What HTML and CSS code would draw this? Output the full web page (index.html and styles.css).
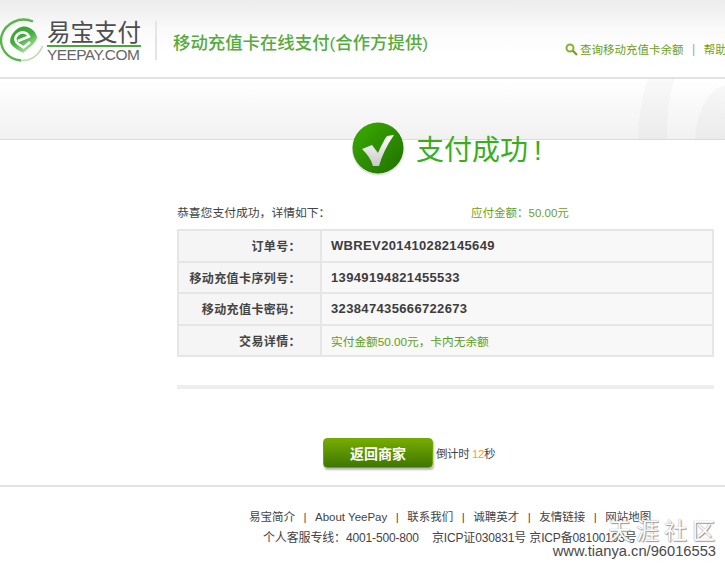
FILE: index.html
```html
<!DOCTYPE html>
<html lang="zh-CN">
<head>
<meta charset="utf-8">
<title>易宝支付</title>
<link rel="stylesheet" href="styles.css">
</head>
<body>
<div class="page">
  <header class="header">
    <div class="logo">
      <svg class="logo-mark" width="44" height="44" viewBox="0 0 44 44">
        <defs>
          <linearGradient id="blob" x1="0" y1="0" x2="0.6" y2="1">
            <stop offset="0" stop-color="#2f9e2c"/>
            <stop offset="0.55" stop-color="#45b040"/>
            <stop offset="1" stop-color="#b5e0a8"/>
          </linearGradient>
        </defs>
        <path d="M33 3.500C20 -2 5 5 1.500 18C-1 30 7 41 21 42.500" fill="none" stroke="#5cb54c" stroke-width="2.400"/>
        <path d="M21 42.500C31 43 39 37 42.500 28" fill="none" stroke="#b7deac" stroke-width="1.600"/>
        <path d="M23 8.500C29 7.500 36 13 37 19C37 22 34 26 29 30L23 35C19 33 14 30 11 26C8 21 14 10 23 8.500Z" fill="url(#blob)"/>
        <path d="M18 23L29 18.500C27 14 21 13 17.500 16.500C14 20 15 24 19 26.500L23.500 29.500L30 24" fill="none" stroke="#fff" stroke-width="2.600"/>
      </svg>
      <div class="logo-text">
        <div class="logo-cn">易宝支付</div>
        <div class="logo-en">YEEPAY.COM</div>
      </div>
    </div>
    <div class="header-divider"></div>
    <h1 class="header-title">移动充值卡在线支付<span class="paren">(</span>合作方提供<span class="paren">)</span></h1>
    <nav class="header-nav">
      <svg class="search-icon" width="13" height="13" viewBox="0 0 13 13">
        <circle cx="5" cy="5" r="3.500" fill="none" stroke="#8cb030" stroke-width="2"/>
        <path d="M7.700 7.700L12 12" stroke="#7fa328" stroke-width="2.400"/>
      </svg>
      <a class="nav-link">查询移动充值卡余额</a>
      <span class="nav-sep">|</span>
      <a class="nav-link">帮助中心</a>
    </nav>
  </header>
  <div class="band">
    <svg class="band-swirl" width="90" height="60" viewBox="0 0 90 60">
      <path d="M13 0C7 14 4 36 3 60H32C32 36 34 16 40 0Z" fill="#000" fill-opacity=".025"/>
      <path d="M90 6C74 10 62 30 60 60H90Z" fill="#000" fill-opacity=".025"/>
    </svg>
  </div>
  <main class="main">
    <div class="success">
      <svg class="success-icon" width="54" height="54" viewBox="0 0 54 54">
        <defs>
          <linearGradient id="ball" x1="0" y1="0" x2="1" y2="1">
            <stop offset="0" stop-color="#3bad00"/>
            <stop offset="1" stop-color="#1f7000"/>
          </linearGradient>
          <linearGradient id="tick" x1="0" y1="0" x2="0" y2="1">
            <stop offset="0" stop-color="#ffffff"/>
            <stop offset="1" stop-color="#c8c8c8"/>
          </linearGradient>
        </defs>
        <circle cx="27" cy="27.500" r="26" fill="#e2e2e2"/>
        <circle cx="27" cy="26" r="25.500" fill="url(#ball)"/>
        <path d="M11 27L21 23L27 31C30 24 33 18 36 14L43 13C36 23 31 33 28 44L22 44C20 37 16 32 11 27Z" fill="url(#tick)"/>
      </svg>
      <div class="success-text">支付成功<span class="bang">!</span></div>
    </div>
    <div class="summary">
      <span class="summary-note">恭喜您支付成功，详情如下：</span>
      <span class="summary-amount">应付金额：50.00元</span>
    </div>
    <table class="detail">
      <tr><th>订单号：</th><td>WBREV201410282145649</td></tr>
      <tr><th>移动充值卡序列号：</th><td>13949194821455533</td></tr>
      <tr><th>移动充值卡密码：</th><td>323847435666722673</td></tr>
      <tr><th>交易详情：</th><td class="detail-green">实付金额50.00元，卡内无余额</td></tr>
    </table>
    <div class="rule"></div>
    <div class="actions">
      <a class="back-btn">返回商家</a>
      <span class="countdown">倒计时 <em>12</em>秒</span>
    </div>
  </main>
  <footer class="footer">
    <div class="footer-links">
      <a>易宝简介</a><i>|</i><a class="dark">About YeePay</a><i>|</i><a>联系我们</a><i>|</i><a>诚聘英才</a><i>|</i><a>友情链接</a><i>|</i><a>网站地图</a>
    </div>
    <div class="footer-info">
      <span>个人客服专线：4001-500-800</span><span>京ICP证030831号 京ICP备08100193号</span>
    </div>
  </footer>
  <div class="watermark">
    <div class="wm-cn">天涯社区</div>
    <div class="wm-url">www.tianya.cn/96016553</div>
  </div>
</div>
</body>
</html>
```
FILE: styles.css
```css
* { box-sizing: border-box; }
html, body { margin: 0; padding: 0; background: #fff; }
body {
  font-family: "Liberation Sans", "Noto Sans CJK SC", sans-serif;
  font-size: 12px;
  color: #444;
  overflow: hidden;
}
.page { position: relative; width: 725px; height: 567px; overflow: hidden; }

.header {
  height: 79px;
  display: flex;
  align-items: flex-start;
  white-space: nowrap;
  background: linear-gradient(#ececec 0, #fafafa 30px, #fff 55px);
  border-bottom: 2px solid #e2e2e2;
}
.logo { display: flex; width: 155px; flex: none; padding-top: 18px; }
.logo-mark { flex: none; }
.logo-text { margin-left: 3px; width: 94px; }
.logo-cn {
  font-family: "Noto Sans CJK SC", sans-serif;
  font-size: 23.500px;
  line-height: 26px;
  color: #4d4d4d;
  border-bottom: 2px solid #4aa63c;
  height: 29px;
}
.logo-en { font-size: 15.500px; line-height: 15px; color: #666; letter-spacing: -.6px; }
.header-divider { width: 2px; height: 39px; margin-top: 21px; background: #e4e4e4; flex: none; }
.header-title {
  margin: 30px 0 0 16px;
  font-family: "Noto Sans CJK SC", sans-serif;
  font-size: 17.400px;
  line-height: 24px;
  font-weight: 500;
  color: #55ab3c;
  flex: none;
}
.paren { font-family: "Liberation Sans", sans-serif; }
.header-nav {
  display: flex;
  align-items: center;
  margin: 41px 0 0 137px;
  height: 16px;
  flex: none;
  color: #6f9e1a;
}
.search-icon { flex: none; margin-right: 2px; }
.nav-link { font-size: 11.500px; color: #6f9e1a; }
.nav-sep { margin: 0 8.500px; color: #8ab0a0; }

.band {
  position: relative;
  height: 61px;
  background: linear-gradient(#fff, #f1f1f1);
  border-bottom: 1px solid #dcdcdc;
}
.band-swirl { position: absolute; right: 0; top: 0; }

.main {
  padding: 0 11px 0 177px;
  background: linear-gradient(#efefef, #fff) no-repeat top / 100% 6px;
}
.success {
  display: flex;
  align-items: flex-start;
  height: 81px;
  margin: -18px 0 0 174px;
  position: relative;
}
.success-icon { flex: none; }
.success-text {
  margin: 6px 0 0 11px;
  font-family: "Noto Sans CJK SC", sans-serif;
  font-size: 28px;
  line-height: 40px;
  color: #3aae1a;
}
.bang { font-family: "Liberation Sans", sans-serif; margin-left: 6px; }
.summary { display: flex; height: 21px; line-height: 21px; font-size: 11.500px; }
.summary-note { width: 294px; font-size: 11.800px; color: #444; }
.summary-amount { color: #6f9e1a; }
.detail {
  width: 537px;
  border-collapse: collapse;
  margin-top: 5px;
  border: 2px solid #e8e8e8;
}
.detail th, .detail td { height: 31.500px; padding: 0; border: 2px solid #e6e6e6; }
.detail th {
  width: 143px;
  padding-right: 19px;
  text-align: right;
  font-family: "Noto Sans CJK TC", sans-serif;
  font-size: 12px;
  letter-spacing: .4px;
  font-weight: bold;
  background: #f5f5f5;
  color: #444;
}
.detail td {
  padding-left: 9px;
  font-size: 13px;
  font-weight: bold;
  letter-spacing: .35px;
  color: #3d3d3d;
  background: #f8f8f8;
}
.detail td.detail-green { font-size: 11.700px; font-weight: normal; letter-spacing: 0; color: #5e9e14; }
.rule { height: 4px; margin-top: 28px; background: #eeeeee; }
.actions { display: flex; align-items: center; margin: 49px 0 0 146px; height: 30px; }
.back-btn {
  width: 110px;
  height: 30px;
  line-height: 29px;
  text-align: center;
  font-family: "Noto Sans CJK SC", sans-serif;
  font-size: 14px;
  font-weight: 700;
  color: #fff;
  border: 1px solid #6fa800;
  border-radius: 4px;
  background: linear-gradient(#78ab00, #3d7700);
  box-shadow: 1px 2px 2px #bbb;
}
.countdown { margin-left: 3px; font-size: 11.500px; color: #444; letter-spacing: -.4px; }
.countdown em { font-style: normal; color: #f9a02c; }

.footer {
  margin-top: 17px;
  border-top: 2px solid #e4e4e4;
  padding-top: 20px;
  font-size: 11.500px;
  white-space: nowrap;
  color: #444;
}
.footer-links { padding-left: 249px; height: 20px; line-height: 20px; }
.footer-links i { font-style: normal; margin: 0 8.500px; }
.footer-links .dark { color: #444; }
.footer-info { padding-left: 263px; height: 22px; line-height: 22px; font-size: 12px; letter-spacing: -.15px; }
.footer-info span + span { margin-left: 13px; }

.watermark {
  position: absolute;
  right: 9px;
  top: 515px;
  text-align: right;
  color: #fff;
}
.wm-cn {
  font-family: "Noto Sans CJK SC", sans-serif;
  font-size: 23px;
  line-height: 28px;
  letter-spacing: 5px;
  margin-right: -4px;
  text-shadow: 0 0 1px #777, 1px 1px 1px #999;
}
.wm-url {
  font-size: 14.700px;
  line-height: 15px;
  color: #4a4a4a;
  text-shadow: 0 0 2px #fff, 0 0 2px #fff;
  margin-top: 1px;
}
```
